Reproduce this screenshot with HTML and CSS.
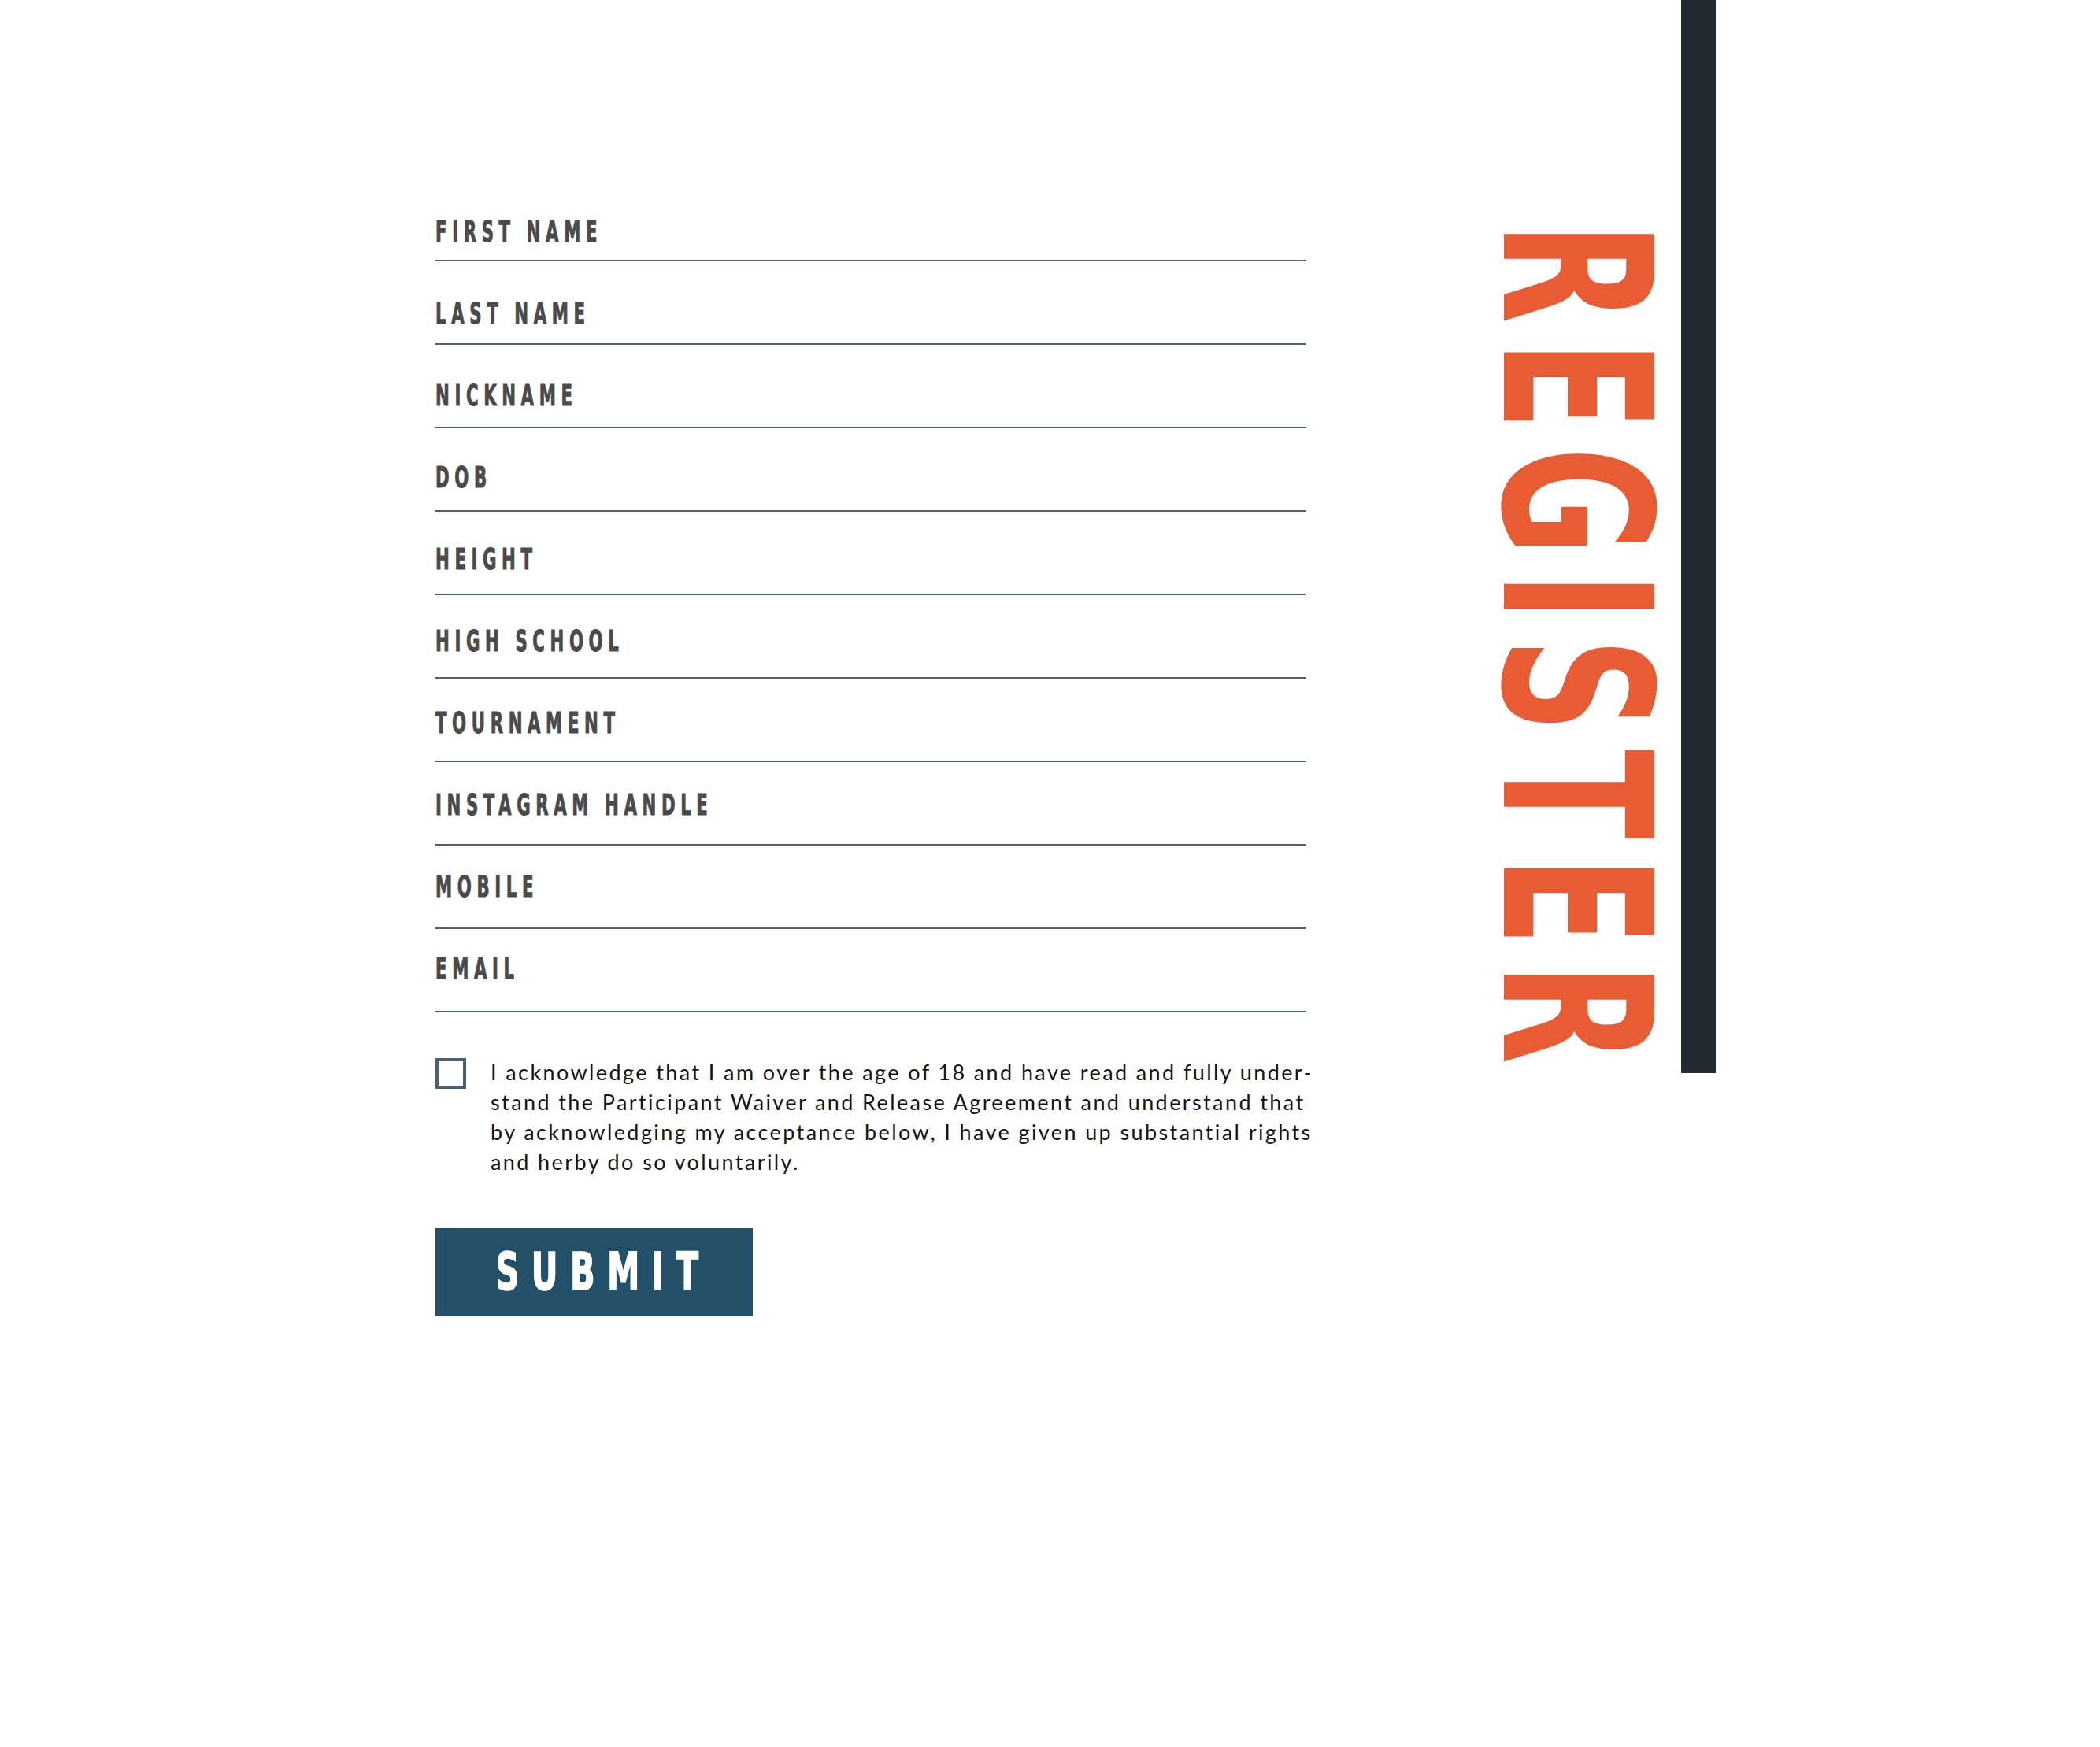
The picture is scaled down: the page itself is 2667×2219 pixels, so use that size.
FILE: index.html
```html
<!DOCTYPE html>
<html lang="en">
<head>
<meta charset="utf-8">
<title>Register</title>
<link rel="stylesheet" href="styles.css">
</head>
<body>
<div class="page">
  <form class="form">
    <div class="field"><span class="label">FIRST NAME</span></div>
    <div class="field"><span class="label">LAST NAME</span></div>
    <div class="field"><span class="label">NICKNAME</span></div>
    <div class="field"><span class="label">DOB</span></div>
    <div class="field"><span class="label">HEIGHT</span></div>
    <div class="field"><span class="label">HIGH SCHOOL</span></div>
    <div class="field"><span class="label">TOURNAMENT</span></div>
    <div class="field"><span class="label">INSTAGRAM HANDLE</span></div>
    <div class="field"><span class="label">MOBILE</span></div>
    <div class="field"><span class="label">EMAIL</span></div>
    <div class="agree">
      <span class="checkbox"></span>
      <p class="agree-text">I acknowledge that I am over the age of 18 and have read and fully under-<br>stand the Participant Waiver and Release Agreement and understand that<br>by acknowledging my acceptance below, I have given up substantial rights<br>and herby do so voluntarily.</p>
    </div>
    <div class="submit"><span class="submit-text">SUBMIT</span></div>
  </form>
  <div class="register">REGISTER</div>
  <div class="bar"></div>
</div>
</body>
</html>
```
FILE: styles.css
```css
html, body {
  margin: 0;
  padding: 0;
  background: #ffffff;
}
.page {
  display: flex;
  align-items: flex-start;
  padding-left: 553px;
  min-height: 2219px;
  box-sizing: border-box;
}
.form {
  width: 1106px;
  padding-top: 226px;
  display: flex;
  flex-direction: column;
}
.field {
  height: 106px;
  border-bottom: 2px solid #4b6072;
  display: flex;
  align-items: flex-end;
  padding-bottom: 17px;
  box-sizing: border-box;
}
.field:nth-child(2) { padding-bottom: 19px; }
.field:nth-child(3) { padding-bottom: 21px; }
.field:nth-child(4) { padding-bottom: 23px; }
.field:nth-child(5) { padding-bottom: 25px; }
.field:nth-child(6) { padding-bottom: 27px; }
.field:nth-child(7) { padding-bottom: 29px; }
.field:nth-child(8) { padding-bottom: 31px; }
.field:nth-child(9) { padding-bottom: 33px; }
.field:nth-child(10) { padding-bottom: 35px; }
.label {
  display: inline-block;
  font-family: "DejaVu Sans Condensed", "DejaVu Sans", sans-serif;
  font-stretch: condensed;
  font-weight: bold;
  font-size: 37.5px;
  line-height: 1;
  letter-spacing: 10.5px;
  color: #4a4a4a;
  -webkit-text-stroke: 1px #4a4a4a;
  transform: scaleX(0.63);
  transform-origin: left bottom;
  white-space: nowrap;
}
.agree {
  display: flex;
  align-items: flex-start;
  margin-top: 58px;
}
.checkbox {
  width: 39px;
  height: 39px;
  border: 4px solid #4b6072;
  box-sizing: border-box;
  flex: none;
}
.agree-text {
  margin: -1px 0 0 31px;
  font-family: "Lato", "Open Sans", sans-serif;
  font-size: 27px;
  line-height: 38px;
  letter-spacing: 2.4px;
  color: #141414;
  white-space: nowrap;
}
.submit {
  margin-top: 65px;
  width: 403px;
  height: 112px;
  background: #225068;
  display: flex;
  align-items: center;
  justify-content: center;
}
.submit-text {
  display: inline-block;
  color: #ffffff;
  -webkit-text-stroke: 1.5px #ffffff;
  font-family: "DejaVu Sans Condensed", "DejaVu Sans", sans-serif;
  font-stretch: condensed;
  font-weight: bold;
  font-size: 66px;
  line-height: 1;
  letter-spacing: 22px;
  margin-right: -22px;
  transform: scaleX(0.7);
}
.register {
  writing-mode: vertical-rl;
  font-family: "DejaVu Sans Condensed", "DejaVu Sans", sans-serif;
  font-stretch: condensed;
  font-weight: bold;
  font-size: 262px;
  line-height: 1;
  letter-spacing: 30px;
  color: #e85c35;
  margin-left: 210px;
  margin-top: 282px;
  transform: scaleY(0.71);
  transform-origin: center top;
  flex: none;
}
.bar {
  width: 44px;
  height: 1363px;
  background: #222b32;
  margin-left: 4px;
  flex: none;
}
```
